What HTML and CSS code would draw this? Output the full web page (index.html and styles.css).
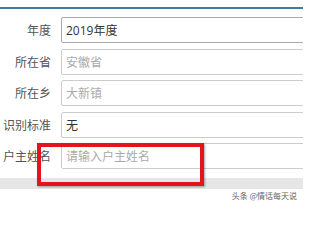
FILE: index.html
```html
<!DOCTYPE html>
<html lang="zh">
<head>
<meta charset="utf-8">
<link rel="stylesheet" href="styles.css">
</head>
<body>
<div class="page">
  <div class="header"></div>
  <form class="form">
    <div class="row">
      <label class="label">年度</label>
      <div class="field field-active"><span class="value">2019年度</span></div>
    </div>
    <div class="row">
      <label class="label">所在省</label>
      <div class="field"><span class="placeholder">安徽省</span></div>
    </div>
    <div class="row">
      <label class="label">所在乡</label>
      <div class="field"><span class="placeholder">大新镇</span></div>
    </div>
    <div class="row">
      <label class="label">识别标准</label>
      <div class="field"><span class="value">无</span></div>
    </div>
    <div class="row">
      <label class="label">户主姓名</label>
      <div class="field"><span class="placeholder">请输入户主姓名</span></div>
    </div>
  </form>
  <div class="band"></div>
  <div class="watermark">头条 @情话每天说</div>
  <div class="highlight"></div>
</div>
</body>
</html>
```
FILE: styles.css
```css
html, body {
  margin: 0;
  padding: 0;
  background: #ffffff;
  overflow: hidden;
}
.page {
  position: relative;
  width: 303px;
  height: 202px;
  overflow: hidden;
  font-family: "Open Sans", "Noto Sans CJK SC", sans-serif;
}
.header {
  height: 7px;
  border-bottom: 2px solid #3f7b9c;
}
.form {
  display: flex;
  flex-direction: column;
  gap: 5.5px;
  padding-top: 8px;
  margin: 0;
}
.row {
  display: flex;
  align-items: center;
  gap: 10px;
  height: 26px;
}
.label {
  flex: 0 0 51px;
  text-align: right;
  font-size: 12px;
  color: #555555;
  white-space: nowrap;
}
.field {
  flex: 0 0 280px;
  box-sizing: border-box;
  height: 26px;
  border: 1px solid #cccccc;
  border-radius: 2px;
  display: flex;
  align-items: center;
  padding-left: 4px;
  font-size: 12px;
}
.field-active {
  border-color: #a9a9a9;
}
.value {
  color: #333333;
}
.placeholder {
  color: #aaaaaa;
}
.band {
  margin-top: 9px;
  height: 11px;
  background: #e6e6e6;
}
.watermark {
  text-align: right;
  padding-right: 6px;
  margin-top: 1px;
  font-size: 8px;
  color: #666666;
  font-family: "Noto Sans CJK SC", sans-serif;
}
.highlight {
  position: absolute;
  left: 37px;
  top: 143px;
  width: 159px;
  height: 35px;
  border: 4px solid #e3141c;
  box-shadow: 1px 1px 2px rgba(0, 0, 0, 0.35);
}
```
